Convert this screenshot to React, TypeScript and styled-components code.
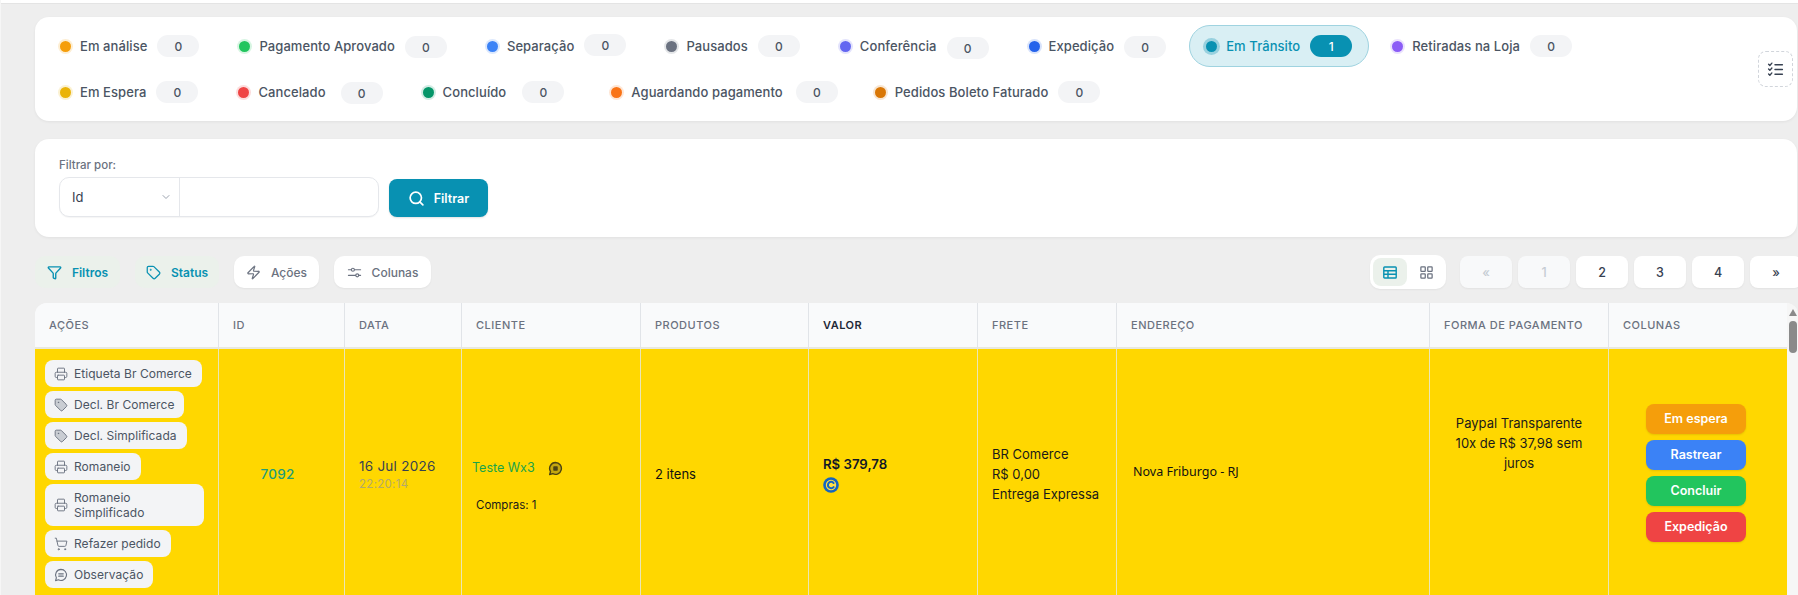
import React from "react";
import styled, { createGlobalStyle } from "styled-components";
import {
  ChevronDown,
  Filter,
  LayoutGrid,
  Printer,
  Search,
  ShoppingCart,
  Tag,
  Zap,
} from "lucide-react";

const Global = createGlobalStyle`
  html, body { margin: 0; padding: 0; height: 595px; overflow: hidden; background: #eeeeee; }
  body { font-family: Inter, "Liberation Sans", sans-serif; color: #1f2937; }
  * { box-sizing: border-box; }
`;

const Page = styled.div`
  width: 1798px;
  height: 595px;
  overflow: hidden;
  background: #eeeeee;
  border-left: 1px solid #f6f6f6;
`;
const TopStrip = styled.div`
  height: 4px;
  background: #ffffff;
  border-bottom: 1px solid #e4e4e4;
`;
const Content = styled.div`
  padding: 13px 0 0 34px;
`;
const Card = styled.section`
  background: #ffffff;
  border-radius: 14px;
  box-shadow: 0 1px 3px rgba(0, 0, 0, 0.06);
`;
const StatusCard = styled(Card)`
  height: 104px;
  margin: 0 1px 18px 0;
  padding: 8px 4px 8px 8px;
  display: flex;
  align-items: center;
`;
const StatusList = styled.div`
  flex: 1;
  display: flex;
  flex-wrap: wrap;
  gap: 4px 6px;
`;
const StatusItem = styled.div<{ $active?: boolean; $after: number }>`
  height: 42px;
  margin-right: ${(p) => p.$after}px;
  display: flex;
  align-items: center;
  padding: 0 16px;
  border-radius: 21px;
  border: 1px solid ${(p) => (p.$active ? "#9fd3e0" : "transparent")};
  background: ${(p) => (p.$active ? "#d9eff4" : "transparent")};
`;
const Dot = styled.span<{ $color: string; $active?: boolean }>`
  width: 11px;
  height: 11px;
  border-radius: 50%;
  background: ${(p) => p.$color};
  box-shadow: 0 0 0 ${(p) => (p.$active ? 3 : 2)}px ${(p) => p.$color}${(p) => (p.$active ? "50" : "2e")};
  flex: none;
`;
const StatusLabel = styled.span<{ $active?: boolean; $gap: number }>`
  margin: 0 ${(p) => p.$gap}px 0 9px;
  font-size: 13px;
  font-weight: 500;
  letter-spacing: 0.08px;
  white-space: nowrap;
  color: ${(p) => (p.$active ? "#0891b2" : "#4b5563")};
`;
const Count = styled.span<{ $active?: boolean; $dy: number }>`
  width: 42px;
  height: 22px;
  border-radius: 11px;
  display: flex;
  align-items: center;
  justify-content: center;
  font-size: 12px;
  font-weight: 500;
  transform: translateY(${(p) => p.$dy}px);
  background: ${(p) => (p.$active ? "#0891b2" : "#f3f4f6")};
  color: ${(p) => (p.$active ? "#ffffff" : "#4b5563")};
`;
const DashedButton = styled.button`
  width: 35px;
  height: 36px;
  flex: none;
  padding: 0;
  background: #ffffff;
  border: 1px dashed #d1d5db;
  border-radius: 8px;
  color: #374151;
  display: flex;
  align-items: center;
  justify-content: center;
`;
const FilterCard = styled(Card)`
  height: 98px;
  margin: 0 1px 18px 0;
  padding: 19px 24px 20px;
`;
const FilterLabel = styled.div`
  height: 14px;
  margin-bottom: 5px;
  font-size: 11.5px;
  font-weight: 500;
  line-height: 14px;
  color: #6b7280;
`;
const FilterRow = styled.div`
  display: flex;
  align-items: flex-end;
  gap: 10px;
`;
const InputGroup = styled.div`
  width: 320px;
  height: 40px;
  display: flex;
  border: 1px solid #e5e7eb;
  border-radius: 10px;
  background: #ffffff;
  box-shadow: 0 1px 1px rgba(0, 0, 0, 0.04);
`;
const SelectBox = styled.div`
  width: 120px;
  padding: 0 7px 0 12px;
  display: flex;
  align-items: center;
  justify-content: space-between;
  border-right: 1px solid #e5e7eb;
  font-size: 13px;
  color: #374151;
`;
const FilterButton = styled.button`
  width: 99px;
  height: 38px;
  border: 0;
  border-radius: 8px;
  background: #0891b2;
  color: #ffffff;
  font: 600 12.5px Inter, sans-serif;
  display: flex;
  align-items: center;
  justify-content: center;
  gap: 9px;
  box-shadow: 0 1px 2px rgba(0, 0, 0, 0.12);
`;
const Toolbar = styled.div`
  width: 1767px;
  height: 34px;
  margin-bottom: 14px;
  display: flex;
  align-items: center;
`;
const ToolGroup = styled.div`
  display: flex;
  gap: 15px;
`;
const ToolButton = styled.button<{ $tinted?: boolean; $w: number }>`
  width: ${(p) => p.$w}px;
  height: 32px;
  padding: 0;
  border: 0;
  border-radius: 10px;
  display: flex;
  align-items: center;
  justify-content: center;
  gap: 10px;
  font: ${(p) => (p.$tinted ? 600 : 500)} 12px Inter, sans-serif;
  background: ${(p) => (p.$tinted ? "#ebf1eb" : "#ffffff")};
  color: ${(p) => (p.$tinted ? "#0891b2" : "#6b7280")};
  box-shadow: ${(p) => (p.$tinted ? "none" : "0 1px 2px rgba(0,0,0,.05)")};
`;
const RightGroup = styled.div`
  margin-left: auto;
  display: flex;
  align-items: center;
  gap: 14px;
`;
const ViewToggle = styled.div`
  width: 76px;
  height: 34px;
  padding: 3px;
  display: flex;
  gap: 2px;
  background: #ffffff;
  border-radius: 10px;
  box-shadow: 0 1px 2px rgba(0, 0, 0, 0.05);
`;
const ViewButton = styled.div<{ $active?: boolean }>`
  width: 34px;
  height: 28px;
  border-radius: 8px;
  display: flex;
  align-items: center;
  justify-content: center;
  background: ${(p) => (p.$active ? "#ebf1eb" : "transparent")};
  color: ${(p) => (p.$active ? "#0891b2" : "#6b7280")};
`;
const Pager = styled.div`
  display: flex;
  gap: 6px;
`;
const PageButton = styled.button<{ $disabled?: boolean }>`
  width: 52px;
  height: 32px;
  padding: 0;
  border: 0;
  border-radius: 8px;
  font: 500 12.5px Inter, sans-serif;
  background: ${(p) => (p.$disabled ? "#f8f9fa" : "#ffffff")};
  color: ${(p) => (p.$disabled ? "#c5ccd3" : "#374151")};
  box-shadow: 0 1px 2px rgba(0, 0, 0, 0.05);
`;
const TableFrame = styled.div`
  display: flex;
  height: 292px;
  overflow: hidden;
  border-radius: 12px 12px 0 0;
  background: #f8f9fb;
`;
const Table = styled.table`
  width: 1752px;
  table-layout: fixed;
  border-collapse: separate;
  border-spacing: 0;
  flex: none;
  align-self: flex-start;
`;
const Th = styled.th<{ $w: number; $strong?: boolean }>`
  width: ${(p) => p.$w}px;
  height: 46px;
  padding: 0 14px;
  text-align: left;
  font-size: 11px;
  font-weight: ${(p) => (p.$strong ? 600 : 500)};
  letter-spacing: 0.5px;
  white-space: nowrap;
  color: ${(p) => (p.$strong ? "#1f2937" : "#6b7280")};
  background: #f9fafb;
  border-right: 1px solid #e1e4e8;
  border-bottom: 2px solid #e8e8e0;
  &:last-child { border-right: 0; }
`;
const Td = styled.td<{ $center?: boolean; $trim?: number }>`
  height: 250px;
  padding: 10px ${(p) => p.$trim ?? 14}px 10px 14px;
  vertical-align: middle;
  background: #ffd700;
  font-size: 13px;
  line-height: 20px;
  color: #1a1a1a;
  text-align: ${(p) => (p.$center ? "center" : "left")};
  border-right: 1px solid #ebe6b4;
  &:last-child { border-right: 0; }
`;
const ActionCell = styled(Td)`
  padding: 11px 10px 10px;
  vertical-align: top;
`;
const ActionList = styled.div`
  display: flex;
  flex-direction: column;
  align-items: flex-start;
  gap: 4px;
`;
const ActionButton = styled.div<{ $wide?: boolean }>`
  width: ${(p) => (p.$wide ? "159px" : "auto")};
  padding: 6px 10px 6px 9px;
  display: flex;
  align-items: center;
  gap: 6px;
  background: #f3f4f6;
  border-radius: 8px;
  font-size: 12px;
  font-weight: 400;
  letter-spacing: 0.05px;
  line-height: 15px;
  color: #4b5563;
  & > svg { flex: none; color: #6b7280; }
`;
const IdLink = styled.span`
  font-size: 13.5px;
  font-weight: 500;
  letter-spacing: 0.3px;
  color: #1f9d7a;
`;
const DateText = styled.div`
  font-size: 13.5px;
  line-height: 20px;
  letter-spacing: 0.25px;
  color: #374151;
`;
const TimeText = styled.div`
  margin: 1px 0 2px;
  font-size: 11.5px;
  line-height: 14px;
  letter-spacing: 0.3px;
  color: #b3a96a;
`;
const ClientName = styled.div`
  display: flex;
  align-items: center;
  gap: 13px;
  margin: 23px 0 19px -4px;
  font-size: 12.5px;
  color: #1aa34a;
`;
const Purchases = styled.div`
  font-size: 11.5px;
  line-height: 16px;
  color: #1a1a1a;
`;
const Price = styled.div`
  font-size: 13.2px;
  font-weight: 600;
  line-height: 20px;
  color: #111827;
`;
const CoinWrap = styled.div`
  height: 16px;
  margin: 3px 0 2px;
`;
const PayNote = styled.div`
  margin-bottom: 62px;
`;
const PlainText = styled.span`
  color: #111111;
`;
const Address = styled.div`
  margin: 0 0 4px 2px;
  font-family: "Noto Sans", Inter, sans-serif;
  font-size: 12.5px;
  color: #111111;
`;
const StateList = styled.div`
  display: flex;
  flex-direction: column;
  align-items: center;
  gap: 6px;
  margin-bottom: 2px;
`;
const StateButton = styled.div<{ $bg: string }>`
  width: 100px;
  height: 30px;
  border-radius: 8px;
  display: flex;
  align-items: center;
  justify-content: center;
  font-size: 12.5px;
  font-weight: 600;
  color: #ffffff;
  background: ${(p) => p.$bg};
  box-shadow: 0 1px 2px rgba(0, 0, 0, 0.1);
`;
const ScrollRail = styled.div`
  flex: 1;
  position: relative;
  background: #f6f6f6;
  display: flex;
  flex-direction: column;
  align-items: center;
  padding-top: 6px;
  gap: 5px;
`;
const ScrollArrow = styled.div`
  width: 0;
  height: 0;
  border-left: 4px solid transparent;
  border-right: 4px solid transparent;
  border-bottom: 7px solid #8a8a8a;
`;
const ScrollThumb = styled.div`
  width: 8px;
  height: 32px;
  border-radius: 4px;
  background: #8a8a8a;
`;

type S = { label: string; color: string; count: number; gap: number; dy: number; after?: number; active?: boolean };
const statuses: S[] = [
  { label: "Em análise", color: "#f59e0b", count: 0, gap: 10, dy: 0 },
  { label: "Pagamento Aprovado", color: "#22c55e", count: 0, gap: 10, dy: 1 },
  { label: "Separação", color: "#3b82f6", count: 0, gap: 10, dy: -1 },
  { label: "Pausados", color: "#6b7280", count: 0, gap: 10, dy: 0 },
  { label: "Conferência", color: "#6366f1", count: 0, gap: 10, dy: 2 },
  { label: "Expedição", color: "#2563eb", count: 0, gap: 10, dy: 1 },
  { label: "Em Trânsito", color: "#0891b2", count: 1, gap: 10, dy: 0, active: true },
  { label: "Retiradas na Loja", color: "#8b5cf6", count: 0, gap: 10, dy: 0 },
  { label: "Em Espera", color: "#eab308", count: 0, gap: 10, dy: 0 },
  { label: "Cancelado", color: "#ef4444", count: 0, gap: 15, dy: 1 },
  { label: "Concluído", color: "#059669", count: 0, gap: 16, dy: 0, after: 7 },
  { label: "Aguardando pagamento", color: "#f97316", count: 0, gap: 13, dy: 0, after: -3 },
  { label: "Pedidos Boleto Faturado", color: "#d97706", count: 0, gap: 10, dy: 0 },
];

const columns = [
  { t: "AÇÕES", w: 184 },
  { t: "ID", w: 126 },
  { t: "DATA", w: 117 },
  { t: "CLIENTE", w: 179 },
  { t: "PRODUTOS", w: 168 },
  { t: "VALOR", w: 169 },
  { t: "FRETE", w: 139 },
  { t: "ENDEREÇO", w: 313 },
  { t: "FORMA DE PAGAMENTO", w: 179 },
  { t: "COLUNAS", w: 178 },
];

const ChecklistIcon = () => (
  <svg width="17" height="17" viewBox="0 0 16 16" fill="none" stroke="currentColor" strokeWidth="1.3" strokeLinecap="round" strokeLinejoin="round">
    <path d="M1.5 3l1.2 1.2L4.6 2M1.5 7.6l1.2 1.2 1.9-2.2M1.5 12.2l1.2 1.2 1.9-2.2" />
    <path d="M7.5 3.5h7M7.5 8h7M7.5 12.5h7" />
  </svg>
);
const SlidersIcon = () => (
  <svg width="15" height="15" viewBox="0 0 16 16" fill="none" stroke="currentColor" strokeWidth="1.2" strokeLinecap="round">
    <path d="M1.5 5h3.2M8 5h6.5M1.5 11h7.7M12.5 11h2" />
    <circle cx="6.3" cy="5" r="1.6" />
    <circle cx="10.9" cy="11" r="1.6" />
  </svg>
);
const TableIcon = () => (
  <svg width="14" height="13" viewBox="0 0 14 13" fill="none" stroke="currentColor" strokeWidth="1.4">
    <rect x="0.8" y="1" width="12.4" height="11" rx="0.8" />
    <path d="M0.8 4.7h12.4M0.8 8.3h12.4M5 4.7v7.3" />
  </svg>
);
const NoteIcon = ({ size = 13 }: { size?: number }) => (
  <svg width={size} height={size} viewBox="0 0 16 16" fill="none" stroke="currentColor" strokeWidth="1.3" strokeLinecap="round" strokeLinejoin="round">
    <path d="M8 1.6a6.3 6.3 0 1 1-2.9 11.9L1.8 14.4l.9-3.2A6.3 6.3 0 0 1 8 1.6z" />
    <path d="M5.4 6.7h5.2M5.4 9.3h5.2" />
  </svg>
);
const BubbleIcon = () => (
  <svg width="15" height="15" viewBox="0 0 16 16">
    <path d="M8 1.6a6.3 6.3 0 1 1-2.9 11.9L1.8 14.4l.9-3.2A6.3 6.3 0 0 1 8 1.6z" fill="#c4a70f" stroke="#4b4312" strokeWidth="1.5" strokeLinejoin="round" />
    <rect x="5.6" y="5.6" width="4.8" height="4.8" rx="0.8" fill="#4b4312" />
  </svg>
);
const CoinIcon = () => (
  <svg width="16" height="16" viewBox="0 0 16 16" fill="none">
    <circle cx="8" cy="8" r="7.8" fill="#1565c0" />
    <circle cx="8" cy="8" r="5.2" fill="#ffe04a" />
    <path d="M10.6 6A3.2 3.2 0 1 0 10.6 10" stroke="#1565c0" strokeWidth="2" fill="none" strokeLinecap="round" />
  </svg>
);

export default function App() {
  return (
    <Page>
      <Global />
      <TopStrip />
      <Content>
        <StatusCard>
          <StatusList>
            {statuses.map((s) => (
              <StatusItem key={s.label} $active={s.active} $after={s.after ?? 0}>
                <Dot $color={s.color} $active={s.active} />
                <StatusLabel $active={s.active} $gap={s.gap}>{s.label}</StatusLabel>
                <Count $active={s.active} $dy={s.dy}>{s.count}</Count>
              </StatusItem>
            ))}
          </StatusList>
          <DashedButton aria-label="Selecionar"><ChecklistIcon /></DashedButton>
        </StatusCard>

        <FilterCard>
          <FilterLabel>Filtrar por:</FilterLabel>
          <FilterRow>
            <InputGroup>
              <SelectBox>
                Id
                <ChevronDown size={12} color="#9ca3af" />
              </SelectBox>
            </InputGroup>
            <FilterButton><Search size={17} strokeWidth={2.4} />Filtrar</FilterButton>
          </FilterRow>
        </FilterCard>

        <Toolbar>
          <ToolGroup>
            <ToolButton $tinted $w={85}><Filter size={15} strokeWidth={2.2} />Filtros</ToolButton>
            <ToolButton $tinted $w={84}><Tag size={15} />Status</ToolButton>
            <ToolButton $w={85}><Zap size={15} />Ações</ToolButton>
            <ToolButton $w={97}><SlidersIcon />Colunas</ToolButton>
          </ToolGroup>
          <RightGroup>
            <ViewToggle>
              <ViewButton $active><TableIcon /></ViewButton>
              <ViewButton><LayoutGrid size={15} /></ViewButton>
            </ViewToggle>
            <Pager>
              <PageButton $disabled>«</PageButton>
              <PageButton $disabled>1</PageButton>
              <PageButton>2</PageButton>
              <PageButton>3</PageButton>
              <PageButton>4</PageButton>
              <PageButton>»</PageButton>
            </Pager>
          </RightGroup>
        </Toolbar>

        <TableFrame>
          <Table>
            <thead>
              <tr>
                {columns.map((c) => (
                  <Th key={c.t} $w={c.w} $strong={c.t === "VALOR"}>{c.t}</Th>
                ))}
              </tr>
            </thead>
            <tbody>
              <tr>
                <ActionCell>
                  <ActionList>
                    <ActionButton><Printer size={14} strokeWidth={1.6} />Etiqueta Br Comerce</ActionButton>
                    <ActionButton><Tag size={14} strokeWidth={1.6} fill="#c9cdd3" />Decl. Br Comerce</ActionButton>
                    <ActionButton><Tag size={14} strokeWidth={1.6} fill="#c9cdd3" />Decl. Simplificada</ActionButton>
                    <ActionButton><Printer size={14} strokeWidth={1.6} />Romaneio</ActionButton>
                    <ActionButton $wide><Printer size={14} strokeWidth={1.6} />Romaneio Simplificado</ActionButton>
                    <ActionButton><ShoppingCart size={14} strokeWidth={1.6} />Refazer pedido</ActionButton>
                    <ActionButton><NoteIcon size={14} />Observação</ActionButton>
                  </ActionList>
                </ActionCell>
                <Td $center $trim={22}><IdLink>7092</IdLink></Td>
                <Td>
                  <DateText>16 Jul 2026</DateText>
                  <TimeText>22:20:14</TimeText>
                </Td>
                <Td>
                  <ClientName>Teste Wx3 <BubbleIcon /></ClientName>
                  <Purchases>Compras: 1</Purchases>
                </Td>
                <Td><PlainText>2 itens</PlainText></Td>
                <Td>
                  <Price>R$ 379,78</Price>
                  <CoinWrap><CoinIcon /></CoinWrap>
                </Td>
                <Td>BR Comerce<br />R$ 0,00<br />Entrega Expressa</Td>
                <Td><Address>Nova Friburgo - RJ</Address></Td>
                <Td $center><PayNote>Paypal Transparente<br />10x de R$ 37,98 sem juros</PayNote></Td>
                <Td $trim={18}>
                  <StateList>
                    <StateButton $bg="#f59e0b">Em espera</StateButton>
                    <StateButton $bg="#3b82f6">Rastrear</StateButton>
                    <StateButton $bg="#22c55e">Concluir</StateButton>
                    <StateButton $bg="#ef4444">Expedição</StateButton>
                  </StateList>
                </Td>
              </tr>
            </tbody>
          </Table>
          <ScrollRail>
            <ScrollArrow />
            <ScrollThumb />
          </ScrollRail>
        </TableFrame>
      </Content>
    </Page>
  );
}
